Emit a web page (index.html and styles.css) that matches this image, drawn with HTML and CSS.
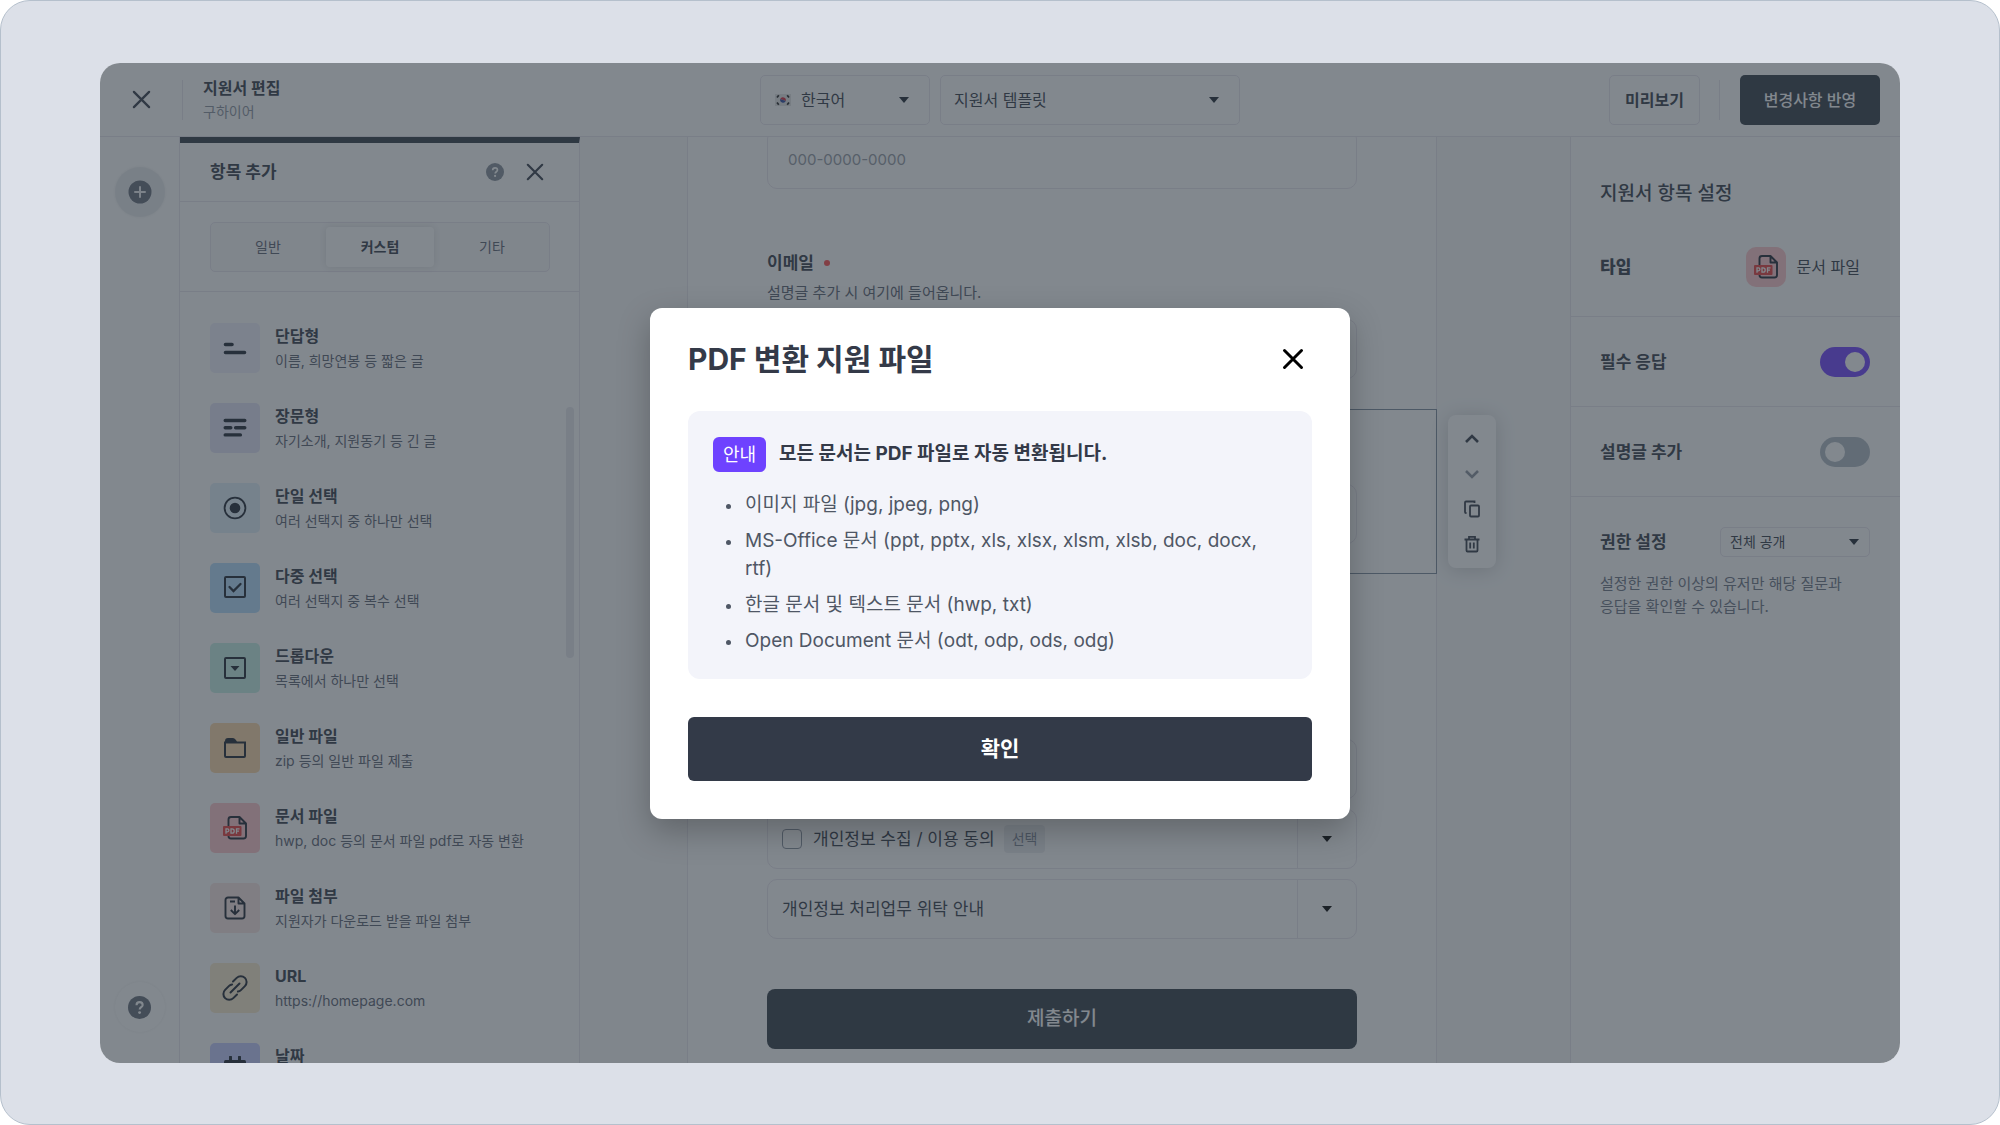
FILE: index.html
```html
<!DOCTYPE html>
<html lang="ko">
<head>
<meta charset="utf-8">
<meta name="viewport" content="width=device-width, initial-scale=1">
<title>지원서 편집</title>
<link rel="stylesheet" href="styles.css">
</head>
<body>
<svg class="defs" aria-hidden="true">
  <symbol id="close" viewBox="0 0 20 20"><path d="M2 2 18 18M18 2 2 18" fill="none" stroke="currentColor" stroke-width="2.4" stroke-linecap="round"/></symbol>
  <symbol id="help" viewBox="0 0 24 24"><circle cx="12" cy="12" r="12" fill="currentColor"/><path d="M8.9 9.6c0-2 1.4-3.200 3.200-3.200s3.200 1.100 3.200 2.900c0 2.300-3.100 2.400-3.100 4.800" fill="none" stroke="#fff" stroke-width="2.200"/><circle cx="12.100" cy="17.300" r="1.500" fill="#fff"/></symbol>
  <symbol id="pdf" viewBox="0 0 28 28"><path d="M7.500 12V5.500a2.500 2.500 0 0 1 2.500-2.500h8.500l6.500 6.500V22a2.500 2.500 0 0 1-2.500 2.500H10A2.500 2.500 0 0 1 7.500 22M18.500 3v6.500H25" fill="none" stroke="#1c2430" stroke-width="1.900" stroke-linejoin="round"/><rect x="2" y="12" width="18.500" height="10" rx="1" fill="#e83a3a"/><path d="M5 19.800v-5h1.400a1.500 1.500 0 0 1 0 3H5M10 14.800v4.400h1a2.200 2.200 0 0 0 0-4.400zM15.500 19.800v-5h3M15.500 17.200h2.500" fill="none" stroke="#fff" stroke-width="1.300"/></symbol>
</svg>
<div class="frame">
<div class="app">
  <header class="topbar">
    <div class="lead">
      <button class="plain leave" aria-label="닫기"><svg width="19" height="19"><use href="#close"/></svg></button>
      <div class="doc">
        <h1>지원서 편집</h1>
        <p>구하이어</p>
      </div>
    </div>
    <div class="pickers">
      <div class="picker lang">
        <svg class="flag" width="16" height="12" viewBox="0 0 16 12"><rect width="16" height="12" fill="#e4e4e4"/><path d="M5.200 5a3 3 0 0 1 5.600 2z" fill="#d8283c"/><path d="M5.200 5a3 3 0 0 0 5.600 2z" fill="#2846a0"/><path d="M2 3.500 3.800 1.300M12.200 1.300 14 3.500M2 8.500l1.800 2.200M12.200 10.700 14 8.500" stroke="#222" stroke-width="1.800"/></svg>
        <select aria-label="언어"><option>한국어</option></select>
      </div>
      <div class="picker tpl">
        <select aria-label="템플릿"><option>지원서 템플릿</option></select>
      </div>
    </div>
    <div class="actions">
      <button class="preview">미리보기</button>
      <button class="save">변경사항 반영</button>
    </div>
  </header>

  <div class="work">
    <nav class="rail">
      <button class="round add" aria-label="추가"><svg width="24" height="24" viewBox="0 0 24 24"><circle cx="12" cy="12" r="11.500" fill="currentColor"/><path d="M12 7v10M7 12h10" stroke="#f0f1f3" stroke-width="2" stroke-linecap="round"/></svg></button>
      <button class="round" aria-label="도움말"><svg width="23" height="23"><use href="#help"/></svg></button>
    </nav>

    <aside class="palette">
      <div class="palette-head">
        <h2>항목 추가</h2>
        <button class="plain hint" aria-label="도움말"><svg width="18" height="18"><use href="#help"/></svg></button>
        <button class="plain" aria-label="닫기"><svg width="18" height="18"><use href="#close"/></svg></button>
      </div>
      <div class="tabs-wrap">
        <div class="tabs">
          <button>일반</button>
          <button class="on">커스텀</button>
          <button>기타</button>
        </div>
      </div>
      <ul class="items">
        <li><span class="tile short"><svg width="24" height="24" viewBox="0 0 24 24"><path d="M2.500 8.500h6.500M2.500 16.500h19" stroke="#1c2430" stroke-width="3.600" stroke-linecap="round"/></svg></span><div><h3>단답형</h3><p>이름, 희망연봉 등 짧은 글</p></div></li>
        <li><span class="tile long"><svg width="24" height="24" viewBox="0 0 24 24"><path d="M2.200 4.500h19.600M2.200 11.700h5.600M12.600 11.700h9.200M2.200 18.900h15.200" stroke="#1c2430" stroke-width="3.400" stroke-linecap="round"/></svg></span><div><h3>장문형</h3><p>자기소개, 지원동기 등 긴 글</p></div></li>
        <li><span class="tile single"><svg width="24" height="24" viewBox="0 0 24 24"><circle cx="12" cy="12" r="10.400" fill="none" stroke="#1c2430" stroke-width="1.800"/><circle cx="12" cy="12" r="5.300" fill="#1c2430"/></svg></span><div><h3>단일 선택</h3><p>여러 선택지 중 하나만 선택</p></div></li>
        <li><span class="tile multi"><svg width="24" height="24" viewBox="0 0 24 24"><rect x="2" y="1" width="20" height="20" rx="1" fill="none" stroke="#1c2430" stroke-width="2"/><path d="m6.500 11 4 4 7-7" fill="none" stroke="#1c2430" stroke-width="2.300" stroke-linecap="round"/></svg></span><div><h3>다중 선택</h3><p>여러 선택지 중 복수 선택</p></div></li>
        <li><span class="tile drop"><svg width="24" height="24" viewBox="0 0 24 24"><rect x="2" y="2" width="20" height="20" rx="1" fill="none" stroke="#1c2430" stroke-width="2"/><path d="M7.500 10h9L12 15z" fill="#1c2430"/></svg></span><div><h3>드롭다운</h3><p>목록에서 하나만 선택</p></div></li>
        <li><span class="tile folder"><svg width="24" height="24" viewBox="0 0 24 24"><path d="M2 6.500h20V20a1 1 0 0 1-1 1H3a1 1 0 0 1-1-1z" fill="none" stroke="#1c2430" stroke-width="2"/><path d="M2 7V5q0-3 3-3h4.500q3 0 5 5z" fill="#1c2430"/></svg></span><div><h3>일반 파일</h3><p>zip 등의 일반 파일 제출</p></div></li>
        <li><span class="tile pdf"><svg width="28" height="28"><use href="#pdf"/></svg></span><div><h3>문서 파일</h3><p>hwp, doc 등의 문서 파일 pdf로 자동 변환</p></div></li>
        <li><span class="tile attach"><svg width="24" height="24" viewBox="0 0 24 24"><path d="M5 1.500h10.500l6 6V20a2.500 2.500 0 0 1-2.500 2.500H5A2.500 2.500 0 0 1 2.500 20V4A2.500 2.500 0 0 1 5 1.500zM15.500 2v5.500h6M7 5.500h5M12 9.500v8.500M7.800 14l4.200 4.200 4.200-4.200" fill="none" stroke="#1c2430" stroke-width="1.900" stroke-linejoin="round"/></svg></span><div><h3>파일 첨부</h3><p>지원자가 다운로드 받을 파일 첨부</p></div></li>
        <li><span class="tile url"><svg width="26" height="26" viewBox="0 0 26 26"><path d="M11 6.500 14.700 2.900a5.600 5.600 0 0 1 8.200 8.200l-4 4a5.600 5.600 0 0 1-3 1.500M15 19.500l-3.700 3.600a5.600 5.600 0 0 1-8.200-8.200l4-4a5.600 5.600 0 0 1 3-1.500M8.500 17.500l9-9" fill="none" stroke="#1c2430" stroke-width="2" stroke-linecap="round"/></svg></span><div><h3>URL</h3><p>https://homepage.com</p></div></li>
        <li><span class="tile date"><svg width="24" height="24" viewBox="0 0 24 24"><path d="M2.500 4H21.500Q23 4 23 6V23H1V6Q1 4 2.500 4z" fill="#1c2430"/><path d="M7.500 1v5M16.500 1v5" stroke="#1c2430" stroke-width="3" stroke-linecap="round"/></svg></span><div><h3>날짜</h3></div></li>
      </ul>
      <span class="scroll"></span>
    </aside>

    <main class="canvas">
      <form class="sheet">
        <input class="field phone" type="text" placeholder="000-0000-0000" aria-label="000-0000-0000">
        <label class="q" for="email">이메일<i></i></label>
        <p class="sub">설명글 추가 시 여기에 들어옵니다.</p>
        <input class="field" id="email" type="text">
        <div class="selected">
          <div class="field"></div>
          <div class="tools">
            <button type="button" aria-label="위로"><svg width="20" height="20" viewBox="0 0 20 20"><path d="m4 13 6-6 6 6" fill="none" stroke="currentColor" stroke-width="2.600"/></svg></button>
            <button type="button" class="off" aria-label="아래로"><svg width="20" height="20" viewBox="0 0 20 20"><path d="m4 7 6 6 6-6" fill="none" stroke="currentColor" stroke-width="2.600"/></svg></button>
            <button type="button" aria-label="복제"><svg width="20" height="20" viewBox="0 0 20 20"><path d="M4.500 14H4a1 1 0 0 1-1-1V3.500a1 1 0 0 1 1-1h8.500v1.500" fill="none" stroke="currentColor" stroke-width="1.800"/><rect x="8" y="6.500" width="9" height="11" rx="1" fill="none" stroke="currentColor" stroke-width="1.800"/></svg></button>
            <button type="button" aria-label="삭제"><svg width="20" height="20" viewBox="0 0 20 20"><path d="M2.500 5.500h15M4.500 5.500V16.500a1 1 0 0 0 1 1h9a1 1 0 0 0 1-1V5.500M7 5V2.800h6V5M8.200 8.500v6M11.800 8.500v6" fill="none" stroke="currentColor" stroke-width="1.800"/></svg></button>
          </div>
        </div>
        <div class="terms">
          <div class="term"></div>
          <div class="term">
            <label class="agree"><input type="checkbox">개인정보 수집 / 이용 동의</label>
            <span class="chip">선택</span>
            <button type="button" class="fold" aria-label="펼치기"><svg width="10" height="7" viewBox="0 0 10 7"><path d="M0 0h10L5 6z" fill="currentColor"/></svg></button>
          </div>
          <div class="term">
            <span class="agree">개인정보 처리업무 위탁 안내</span>
            <button type="button" class="fold" aria-label="펼치기"><svg width="10" height="7" viewBox="0 0 10 7"><path d="M0 0h10L5 6z" fill="currentColor"/></svg></button>
          </div>
        </div>
        <button type="button" class="submit">제출하기</button>
      </form>
    </main>

    <aside class="props">
      <h2>지원서 항목 설정</h2>
      <div class="prop type"><b>타입</b><span class="kind"><span class="tile pdf small"><svg width="28" height="28"><use href="#pdf"/></svg></span>문서 파일</span></div>
      <div class="prop"><label for="req">필수 응답</label><input class="switch" id="req" type="checkbox" checked></div>
      <div class="prop"><label for="desc">설명글 추가</label><input class="switch" id="desc" type="checkbox"></div>
      <div class="perm">
        <div class="perm-row"><label for="perm">권한 설정</label><div class="picker mini"><select id="perm"><option>전체 공개</option></select></div></div>
        <p>설정한 권한 이상의 유저만 해당 질문과<br>응답을 확인할 수 있습니다.</p>
      </div>
    </aside>
  </div>

  <div class="scrim">
    <section class="modal" role="dialog" aria-labelledby="modal-title">
      <div class="modal-head">
        <h2 id="modal-title">PDF 변환 지원 파일</h2>
        <button class="plain" aria-label="닫기"><svg width="24" height="24" viewBox="0 0 24 24"><path d="M3.500 3.500 20.500 20.500M20.500 3.500 3.500 20.500" stroke="#000" stroke-width="3" stroke-linecap="round"/></svg></button>
      </div>
      <div class="notice">
        <div class="notice-head"><span class="badge">안내</span><strong>모든 문서는 PDF 파일로 자동 변환됩니다.</strong></div>
        <ul>
          <li>이미지 파일 (jpg, jpeg, png)</li>
          <li>MS-Office 문서 (ppt, pptx, xls, xlsx, xlsm, xlsb, doc, docx, rtf)</li>
          <li>한글 문서 및 텍스트 문서 (hwp, txt)</li>
          <li>Open Document 문서 (odt, odp, ods, odg)</li>
        </ul>
      </div>
      <button class="ok">확인</button>
    </section>
  </div>
</div>
</div>
</body>
</html>
```
FILE: styles.css
```css
:root {
  --ink: #343a48;
  --muted: #5a6170;
  --line: #e9e5ee;
  --font: Inter, "Noto Sans CJK KR", sans-serif;
}
* { box-sizing: border-box; margin: 0; padding: 0; }
body { background: #fff; color: var(--ink); font: 16px/24px var(--font); }
button, input, select { font: inherit; color: inherit; background: none; border: 0; outline: 0; }
button { cursor: pointer; }
svg { display: block; }
ul { list-style: none; }
.defs { position: absolute; width: 0; height: 0; }
.plain { display: flex; align-items: center; justify-content: center; }

.frame { display: flex; height: 100vh; padding: 62px calc(5% - 1px) 61px; background: #dce0e8; border: 1px solid #b5c0cc; border-radius: 30px; }
.app { position: relative; display: flex; flex: 1; flex-direction: column; min-width: 0; overflow: hidden; background: #fff; border-radius: 20px; }

/* Top bar */
.topbar { display: grid; flex: none; grid-template-columns: 1fr auto 1fr; align-items: center; height: 74px; border-bottom: 1px solid var(--line); }
.lead { display: flex; align-items: center; }
.leave { width: 83px; height: 40px; border-right: 1px solid var(--line); }
.doc { padding-left: 20px; }
.doc h1 { font-size: 16px; line-height: 24px; font-weight: 700; }
.doc p { font-size: 14px; line-height: 24px; color: #8b929e; }
.pickers { display: flex; gap: 10px; }
.picker { position: relative; display: flex; align-items: center; height: 50px; border: 1px solid var(--line); border-radius: 5px; }
.picker::after { content: ""; position: absolute; right: 20px; border: 5px solid transparent; border-top: 6px solid #1c2430; border-bottom: 0; pointer-events: none; }
.picker select { flex: 1; height: 100%; padding-left: 13px; appearance: none; }
.picker.lang { width: 170px; padding-left: 14px; }
.picker.lang select { padding-left: 10px; }
.picker.tpl { width: 300px; }
.actions { display: flex; justify-content: flex-end; gap: 40px; padding-right: 20px; }
.actions button { height: 50px; border-radius: 5px; }
.actions .preview { position: relative; width: 91px; font-weight: 700; border: 1px solid var(--line); }
.preview::after { content: ""; position: absolute; top: 4px; right: -21px; width: 1px; height: 40px; background: var(--line); }
.save { width: 140px; font-weight: 500; color: #fff; background: #303a45; }

/* Left side */
.work { display: flex; flex: 1; min-height: 0; }
.rail { display: flex; flex: none; flex-direction: column; align-items: center; justify-content: space-between; width: 80px; padding: 30px 0 31px; border-right: 1px solid var(--line); }
.round { display: flex; align-items: center; justify-content: center; width: 50px; height: 50px; color: #646b78; border-radius: 50%; box-shadow: 0 0 3px #00000014; }
.round.add { background: #e9ebee; }
.palette { position: relative; display: flex; flex: none; flex-direction: column; width: 400px; border-top: 6px solid #303a45; border-right: 1px solid var(--line); }
.palette-head { display: flex; flex: none; align-items: center; gap: 22px; height: 59px; padding: 0 35px 0 30px; border-bottom: 1px solid var(--line); }
.palette-head h2 { flex: 1; font-size: 17px; line-height: 24px; }
.hint { color: #848d98; }
.tabs-wrap { padding: 20px 29px 19px 30px; border-bottom: 1px solid var(--line); }
.tabs { display: flex; gap: 4px; height: 50px; padding: 4px 3px; background: #fafafb; border: 1px solid var(--line); border-radius: 5px; }
.tabs button { flex: 1; font-size: 14px; color: var(--muted); border-radius: 4px; }
.tabs .on { font-weight: 700; color: var(--ink); background: #fff; box-shadow: 0 0 8px #0000001f; }
.items { display: flex; flex: 1; flex-direction: column; gap: 30px; min-height: 0; padding: 31px 30px 0; overflow: hidden; }
.items li { display: flex; flex: none; gap: 15px; height: 50px; }
.items h3 { margin-top: 1px; font-size: 16px; line-height: 25px; font-weight: 700; }
.items p { font-size: 14px; line-height: 24px; color: var(--muted); white-space: nowrap; }
.tile { display: flex; flex: none; align-items: center; justify-content: center; width: 50px; height: 50px; border-radius: 5px; }
.short { background: #f0f0fc; }
.long { background: #e4e4f8; }
.single { background: #e2f0fa; }
.multi { background: #b4dcfc; }
.drop { background: #c6f0e6; }
.folder { background: #fcd8a8; }
.tile.pdf { background: #ffc6ca; }
.attach { background: #fae6e4; }
.url { background: #faeace; }
.date { background: #c4caff; }
.scroll { position: absolute; top: 264px; right: 5px; width: 8px; height: 251px; background: #e8e8ee; border-radius: 4px; }

/* Application form */
.canvas { display: flex; flex: 1; justify-content: center; min-width: 0; padding-right: 26px; background: #f9fafb; overflow: hidden; }
.sheet { display: flex; flex: none; flex-direction: column; width: 750px; padding: 0 79px; background: #fff; border: solid var(--line); border-width: 0 1px; }
.sheet > * { flex: none; }
.field { width: 100%; height: 60px; padding: 0 20px; border: 1px solid var(--line); border-radius: 10px; }
.phone { margin: -8px 0 62px; font-size: 15px; }
.field::placeholder { color: #9399a4; opacity: 1; }
.q { display: flex; align-items: center; gap: 10px; font-size: 17px; font-weight: 700; }
.q i { width: 6px; height: 6px; background: #ff4a4a; border-radius: 50%; }
.sub { margin: 7px 0 15px; font-size: 15px; line-height: 22px; color: var(--muted); }
.selected { position: relative; margin: 30px -80px 165px; padding: 74px 79px 29px; border: 1px solid #7c8a9c; }
.tools { position: absolute; top: 5px; left: calc(100% + 12px); display: flex; flex-direction: column; gap: 15px; padding: 14px; background: #fff; border-radius: 8px; box-shadow: 0 2px 20px #00000030; }
.tools button { height: 20px; }
.tools .off { color: #8b929e; }
.terms { display: flex; flex-direction: column; gap: 10px; }
.term { display: flex; align-items: center; height: 60px; padding-left: 14px; border: 1px solid var(--line); border-radius: 10px; }
.agree { display: flex; align-items: center; gap: 11px; font-size: 17px; }
.agree input { width: 20px; height: 20px; appearance: none; border: 1px solid #868e9b; border-radius: 4px; }
.chip { margin-left: 9px; padding: 2px 8px; font-size: 14px; color: #7b8494; background: #ecedf1; border-radius: 4px; }
.fold { display: flex; align-items: center; justify-content: center; width: 59px; height: 58px; margin-left: auto; color: #000; border-left: 1px solid var(--line); }
.submit { height: 60px; margin-top: 50px; font-size: 19px; font-weight: 500; color: #fff; background: #303a45; border-radius: 8px; }

/* Item settings */
.props { flex: none; width: 330px; background: #fff; border-left: 1px solid var(--line); }
.props h2 { padding: 44px 29px 0; font-size: 19px; line-height: 26px; font-weight: 500; }
.prop { display: flex; align-items: center; justify-content: space-between; height: 90px; padding: 0 30px 0 29px; font-size: 17px; font-weight: 700; border-bottom: 1px solid var(--line); }
.type { height: 110px; padding: 10px 40px 0 29px; }
.kind { display: flex; align-items: center; gap: 11px; font-size: 16px; font-weight: 400; }
.small { width: 40px; height: 40px; border-radius: 10px; }
.switch { width: 50px; height: 30px; appearance: none; background: #b0bac4; border-radius: 15px; }
.switch::before { content: ""; display: block; width: 20px; height: 20px; margin: 5px; background: #fff; border-radius: 50%; }
.switch:checked { background: #6e3fff; }
.switch:checked::before { margin-left: 25px; }
.perm { padding: 30px 30px 0 29px; }
.perm-row { display: flex; align-items: center; justify-content: space-between; font-size: 17px; font-weight: 700; }
.mini { width: 150px; height: 30px; font-size: 14px; font-weight: 400; }
.mini::after { right: 10px; }
.mini select { padding-left: 9px; }
.perm p { margin-top: 15px; font-size: 15px; line-height: 23px; color: #6b7383; }

/* Dialog */
.scrim { position: absolute; inset: 0; display: flex; align-items: center; justify-content: center; background: #2f394399; }
.modal { display: flex; flex-direction: column; width: 700px; padding: 31px 38px 38px; background: #fff; border-radius: 12px; box-shadow: 0 12px 32px #00000040; }
.modal-head { display: flex; align-items: center; justify-content: space-between; height: 40px; padding-right: 7px; }
.modal-head h2 { font-size: 30px; line-height: 40px; }
.notice { margin: 32px 0 38px; padding: 26px 25px 24px; background: #f3f4fa; border-radius: 12px; }
.notice-head { display: flex; align-items: center; gap: 13px; }
.badge { width: 53px; height: 35px; font-size: 18px; line-height: 35px; text-align: center; color: #fff; background: #6e42ff; border-radius: 6px; }
.notice strong { font-size: 19px; }
.notice ul { display: flex; flex-direction: column; gap: 8px; margin-top: 19px; }
.notice li { display: flex; font-size: 19px; line-height: 28px; color: #4f5765; }
.notice li::before { content: ""; flex: none; width: 5px; height: 5px; margin: 13px 14px 0 13px; background: currentColor; border-radius: 50%; }
.ok { height: 64px; font-size: 21px; font-weight: 700; color: #fff; background: #333a48; border-radius: 6px; }
```
